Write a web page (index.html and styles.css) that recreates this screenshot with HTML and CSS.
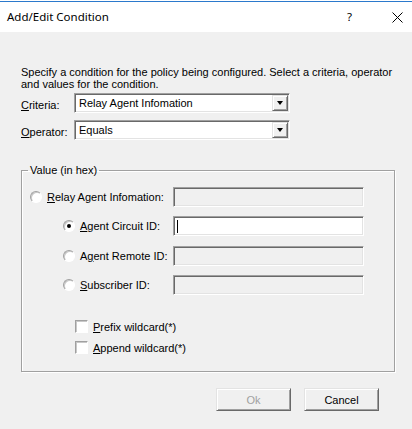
FILE: index.html
```html
<!DOCTYPE html>
<html>
<head>
<meta charset="utf-8">
<link rel="stylesheet" href="styles.css">
</head>
<body>
<div class="dialog">
  <div class="chrome"></div>
  <div class="titlebar">
    <span class="title">Add/Edit Condition</span>
    <span class="help">?</span>
    <span class="close"><svg width="11" height="11" viewBox="0 0 11 11"><path d="M0.5 0.5L10.5 10.5M10.5 0.5L0.5 10.5" stroke="#000" stroke-width="1" fill="none"/></svg></span>
  </div>
  <div class="body">
    <p class="intro">Specify a condition for the policy being configured. Select a criteria, operator<br>and values for the condition.</p>
    <div class="field-row">
      <span class="lbl"><u>C</u>riteria:</span>
      <div class="combo"><span class="combo-text">Relay Agent Infomation</span><span class="combo-btn"><i class="tri"></i></span></div>
    </div>
    <div class="field-row second">
      <span class="lbl"><u>O</u>perator:</span>
      <div class="combo"><span class="combo-text">Equals</span><span class="combo-btn"><i class="tri"></i></span></div>
    </div>
    <fieldset class="group">
      <legend>Value (in hex)</legend>
      <div class="opt-row top">
        <span class="opt"><i class="radio"></i><span><u>R</u>elay Agent Infomation:</span></span>
        <span class="edit"></span>
      </div>
      <div class="opt-row sub r2">
        <span class="opt"><i class="radio on"></i><span><u>A</u>gent Circuit ID:</span></span>
        <span class="edit active"><i class="caret"></i></span>
      </div>
      <div class="opt-row sub r3">
        <span class="opt"><i class="radio"></i><span>A<u>g</u>ent Remote ID:</span></span>
        <span class="edit"></span>
      </div>
      <div class="opt-row sub r4">
        <span class="opt"><i class="radio"></i><span><u>S</u>ubscriber ID:</span></span>
        <span class="edit"></span>
      </div>
      <div class="check-row c1"><i class="check"></i><span><u>P</u>refix wildcard(*)</span></div>
      <div class="check-row c2"><i class="check"></i><span><u>A</u>ppend wildcard(*)</span></div>
    </fieldset>
    <div class="buttons">
      <button class="btn" disabled>Ok</button>
      <button class="btn">Cancel</button>
    </div>
  </div>
</div>
</body>
</html>
```
FILE: styles.css
```css
* { box-sizing: border-box; }
html, body { margin: 0; padding: 0; }
body {
  width: 412px;
  height: 429px;
  overflow: hidden;
  background: #f0f0f0;
  font-family: "Liberation Sans", Arial, sans-serif;
  font-size: 11px;
  color: #000;
}
.dialog { width: 412px; height: 429px; background: #f0f0f0; }
.chrome { height: 2px; background: #fff; border-bottom: 1px solid #2b79cc; }
.titlebar {
  height: 30px;
  background: #fff;
  display: flex;
  align-items: center;
  font-family: "Noto Sans", sans-serif;
  font-size: 11.5px;
  padding-left: 7px;
  padding-bottom: 1px;
}
.title { flex: 1; }
.help { width: 42px; }
.close { width: 23px; display: flex; align-items: center; padding-top: 1px; padding-left: 3px; }
.body { padding: 0 0 0 21px; }
.intro { margin: 34px 0 0; line-height: 12px; }
.field-row { display: flex; align-items: center; height: 20px; margin-top: 3px; }
.field-row.second { margin-top: 7px; }
.lbl { width: 53px; padding-top: 3px; }
u { text-decoration: underline; text-underline-offset: 1px; }
.combo {
  width: 216px;
  height: 20px;
  background: #fff;
  border: 1px solid;
  border-color: #a0a0a0 #fff #fff #a0a0a0;
  box-shadow: inset 1px 1px 0 #696969, inset -1px -1px 0 #e3e3e3;
  display: flex;
  align-items: center;
  padding: 1px 1px 1px 4px;
}
.combo-text { flex: 1; }
.combo-btn {
  width: 16px;
  height: 16px;
  background: #f0f0f0;
  border: 1px solid;
  border-color: #e3e3e3 #696969 #696969 #e3e3e3;
  box-shadow: inset 1px 1px 0 #fff, inset -1px -1px 0 #a0a0a0;
  display: flex;
  align-items: center;
  justify-content: center;
}
.tri {
  width: 0; height: 0;
  border-left: 3.5px solid transparent;
  border-right: 3.5px solid transparent;
  border-top: 4px solid #000;
}
.group {
  margin: 24px 0 0;
  width: 374px;
  border: 1px solid #a0a0a0;
  box-shadow: inset 1px 1px 0 #fff, 1px 1px 0 #fff;
  padding: 10px 0 17px 0;
}
.group legend { margin-left: 6px; padding: 0 2px; line-height: 13px; }
.opt-row { display: flex; align-items: center; height: 20px; }
.opt-row.top { padding-left: 8px; }
.opt-row.sub { padding-left: 41px; }
.r2 { margin-top: 9px; }
.r3 { margin-top: 10px; }
.r4 { margin-top: 9px; }
.opt { display: flex; align-items: center; gap: 5px; }
.opt-row.top .opt { width: 143px; }
.opt-row.sub .opt { width: 110px; }
.radio {
  width: 12px; height: 12px;
  border-radius: 50%;
  background: #fff;
  border: 1px solid;
  border-color: #a0a0a0 #fff #fff #a0a0a0;
  box-shadow: inset 1px 1px 0 #c8c8c8;
  display: flex; align-items: center; justify-content: center;
}
.radio.on::after {
  content: "";
  width: 4px; height: 4px;
  border-radius: 50%;
  background: #000;
}
.edit {
  width: 191px; height: 20px;
  background: #f0f0f0;
  border: 1px solid;
  border-color: #a0a0a0 #fff #fff #a0a0a0;
  box-shadow: inset 1px 1px 0 #696969, inset -1px -1px 0 #e3e3e3;
  display: flex; align-items: center;
  padding-left: 3px;
}
.edit.active { background: #fff; }
.caret { width: 1px; height: 13px; background: #000; }
.check-row { display: flex; align-items: center; gap: 5px; padding-left: 53px; height: 13px; }
.c1 { margin-top: 25px; }
.c2 { margin-top: 8px; }
.check {
  width: 13px; height: 13px;
  background: #fff;
  border: 1px solid;
  border-color: #a0a0a0 #fff #fff #a0a0a0;
  box-shadow: inset 1px 1px 0 #c8c8c8;
}
.buttons { display: flex; justify-content: flex-end; gap: 13px; margin-top: 16px; padding-right: 33px; }
.btn {
  width: 75px; height: 23px;
  background: #f0f0f0;
  font-family: "Liberation Sans", Arial, sans-serif;
  font-size: 11px;
  color: #000;
  border: 1px solid;
  border-color: #e3e3e3 #696969 #696969 #e3e3e3;
  box-shadow: inset 1px 1px 0 #fff, inset -1px -1px 0 #a0a0a0;
  padding: 0;
}
.btn:disabled { color: #a0a0a0; }
```
